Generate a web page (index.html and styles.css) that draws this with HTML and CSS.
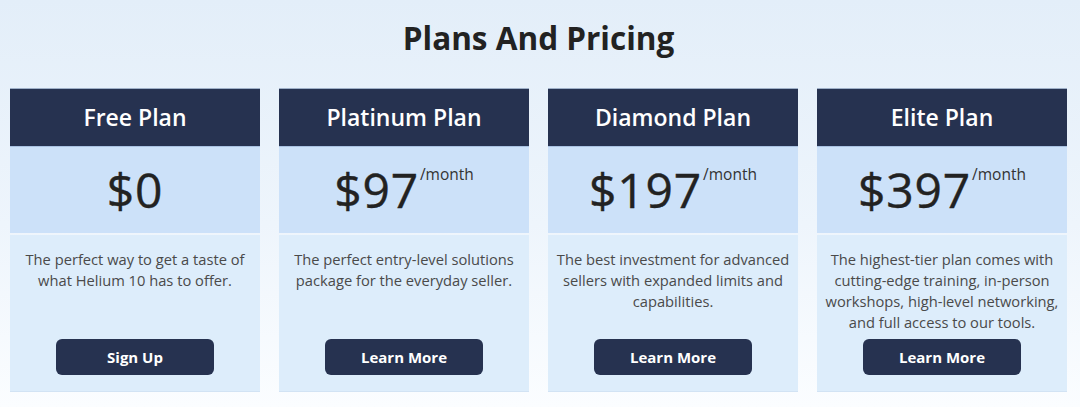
FILE: index.html
```html
<!DOCTYPE html>
<html lang="en">
<head>
<meta charset="utf-8">
<title>Plans And Pricing</title>
<link rel="stylesheet" href="styles.css">
</head>
<body>
<section class="pricing">
  <h1 class="title">Plans And Pricing</h1>
  <div class="cards">
    <div class="card">
      <div class="card-head">Free Plan</div>
      <div class="card-price"><span class="amount">$0</span></div>
      <div class="card-body">
        <p class="desc">The perfect way to get a taste of what Helium 10 has to offer.</p>
        <a class="btn" href="#">Sign Up</a>
      </div>
    </div>
    <div class="card">
      <div class="card-head">Platinum Plan</div>
      <div class="card-price"><span class="amount">$97</span><span class="per">/month</span></div>
      <div class="card-body">
        <p class="desc">The perfect entry-level solutions package for the everyday seller.</p>
        <a class="btn" href="#">Learn More</a>
      </div>
    </div>
    <div class="card">
      <div class="card-head">Diamond Plan</div>
      <div class="card-price"><span class="amount">$197</span><span class="per">/month</span></div>
      <div class="card-body">
        <p class="desc">The best investment for advanced sellers with expanded limits and capabilities.</p>
        <a class="btn" href="#">Learn More</a>
      </div>
    </div>
    <div class="card">
      <div class="card-head">Elite Plan</div>
      <div class="card-price"><span class="amount">$397</span><span class="per">/month</span></div>
      <div class="card-body">
        <p class="desc">The highest-tier plan comes with cutting-edge training, in-person workshops, high-level networking, and full access to our tools.</p>
        <a class="btn" href="#">Learn More</a>
      </div>
    </div>
  </div>
</section>
</body>
</html>
```

FILE: styles.css
```css
html, body {
  margin: 0;
  padding: 0;
}
body {
  width: 1080px;
  height: 407px;
  overflow: hidden;
  font-family: "Open Sans", "Noto Sans", sans-serif;
  background: linear-gradient(180deg, #e3eef9 0%, #eef5fc 55%, #fbfdff 100%);
}
.pricing {
  padding: 18px 13px 0 10px;
}
.title {
  margin: 0;
  text-align: center;
  font-size: 31.5px;
  font-weight: 700;
  line-height: 40px;
  color: #222;
}
.cards {
  margin-top: 30px;
  display: grid;
  grid-template-columns: repeat(4, 250px);
  column-gap: 19px;
}
.card {
  display: flex;
  flex-direction: column;
}
.card-head {
  box-sizing: border-box;
  height: 58px;
  border-top: 1px solid #9fb0c8;
  background: #263250;
  color: #fff;
  font-size: 23px;
  font-weight: 600;
  display: flex;
  align-items: center;
  justify-content: center;
  padding-bottom: 1px;
}
.card-price {
  height: 87px;
  box-sizing: border-box;
  border-top: 1px solid #a9c2e2;
  background: #cce1f9;
  display: flex;
  align-items: center;
  justify-content: center;
  color: #222;
}
.amount {
  font-size: 48px;
  line-height: 50px;
  font-weight: 400;
  letter-spacing: 0.8px;
  -webkit-text-stroke: 0.4px #222;
}
.per {
  font-size: 15.5px;
  line-height: 20px;
  align-self: flex-start;
  margin-top: 17px;
  margin-left: 1px;
  color: #333;
}
.card-body {
  margin-top: 2px;
  height: 157px;
  box-sizing: border-box;
  background: #ddedfb;
  border-bottom: 1px solid #d2e3f4;
  display: flex;
  flex-direction: column;
  align-items: center;
  padding: 14px 8px 16px;
}
.desc {
  margin: 0;
  flex: 1;
  text-align: center;
  font-size: 14.7px;
  line-height: 21px;
  color: #4a4a4a;
}
.btn {
  width: 158px;
  height: 36px;
  border-radius: 6px;
  background: #263250;
  color: #fff;
  font-size: 15px;
  font-weight: 700;
  text-decoration: none;
  display: flex;
  align-items: center;
  justify-content: center;
}
```
